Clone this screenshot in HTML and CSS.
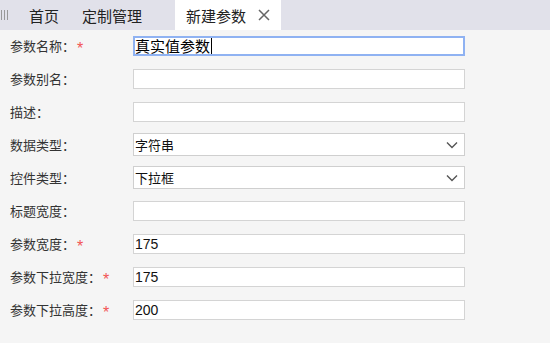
FILE: index.html
```html
<!DOCTYPE html>
<html lang="zh">
<head>
<meta charset="utf-8">
<link rel="stylesheet" href="styles.css">
</head>
<body>
<div class="tabbar">
  <div class="grip"><span></span><span></span><span></span></div>
  <div class="tab">首页</div>
  <div class="tab">定制管理</div>
  <div class="tab active">新建参数<svg class="close" width="12" height="12" viewBox="0 0 12 12"><path d="M1 1L11 11M11 1L1 11" stroke="#666" stroke-width="1.5" fill="none"/></svg></div>
</div>
<form class="form">
  <div class="row"><label class="lbl">参数名称：<span class="req">*</span></label><div class="field focus big">真实值参数<span class="caret"></span></div></div>
  <div class="row"><label class="lbl">参数别名：</label><div class="field"></div></div>
  <div class="row"><label class="lbl">描述：</label><div class="field"></div></div>
  <div class="row"><label class="lbl">数据类型：</label><div class="field select">字符串<svg class="chev" width="12" height="8" viewBox="0 0 12 8"><polyline points="1,1.5 6,6.5 11,1.5" fill="none" stroke="#555" stroke-width="1.4"/></svg></div></div>
  <div class="row"><label class="lbl">控件类型：</label><div class="field select">下拉框<svg class="chev" width="12" height="8" viewBox="0 0 12 8"><polyline points="1,1.5 6,6.5 11,1.5" fill="none" stroke="#555" stroke-width="1.4"/></svg></div></div>
  <div class="row"><label class="lbl">标题宽度：</label><div class="field"></div></div>
  <div class="row"><label class="lbl">参数宽度：<span class="req">*</span></label><div class="field num">175</div></div>
  <div class="row"><label class="lbl">参数下拉宽度：<span class="req">*</span></label><div class="field num">175</div></div>
  <div class="row"><label class="lbl">参数下拉高度：<span class="req">*</span></label><div class="field num">200</div></div>
</form>
</body>
</html>
```
FILE: styles.css
```css
html, body {
  margin: 0;
  padding: 0;
  background: #f5f5f5;
  font-family: "Noto Sans CJK SC", "Liberation Sans", sans-serif;
  color: #333;
}
.tabbar {
  height: 30px;
  background: #e1e1ea;
  display: flex;
  align-items: stretch;
}
.grip {
  width: 18px;
  display: flex;
  gap: 2px;
  align-items: center;
  padding-left: 1px;
  box-sizing: border-box;
}
.grip span {
  width: 1px;
  height: 10px;
  background: #999;
}
.tab {
  display: flex;
  align-items: center;
  padding: 0 11px;
  font-size: 15px;
  color: #222;
  line-height: 1;
}
.tab + .tab { margin-left: 1px; }
.tab.active {
  background: #fff;
  margin-left: 22px;
  padding: 0 11px 0 11px;
}
.close {
  margin-left: 12px;
}
.form {
  margin: 0;
}
.row {
  height: 33px;
  display: flex;
  align-items: center;
}
.row:first-child { margin-top: -1px; }
.lbl {
  width: 123px;
  padding-left: 10px;
  font-size: 13px;
  color: #333;
  flex: none;
  display: flex;
  align-items: center;
}
.req {
  color: #f25454;
  margin-left: 2px;
  padding-top: 6px;
  font-size: 16px;
  font-family: "Liberation Sans", sans-serif;
  line-height: 1;
}
.field {
  width: 332px;
  height: 20px;
  box-sizing: border-box;
  border: 1px solid #d4d4d4;
  background: #fff;
  display: flex;
  align-items: center;
  padding-left: 1px;
  font-size: 13px;
  color: #111;
}
.field.select {
  height: 23px;
  justify-content: space-between;
  padding-right: 4px;
  border-color: #cfcfcf;
}
.field.focus {
  border: 2px solid #8fb2f2;
  padding-left: 0;
}
.field.big {
  font-size: 15px;
  color: #000;
}
.caret {
  width: 1px;
  height: 16px;
  background: #000;
  margin-left: 1px;
}
.field.num {
  font-family: "Liberation Sans", sans-serif;
  font-size: 14px;
}
.chev { margin-right: 2px; }
```
